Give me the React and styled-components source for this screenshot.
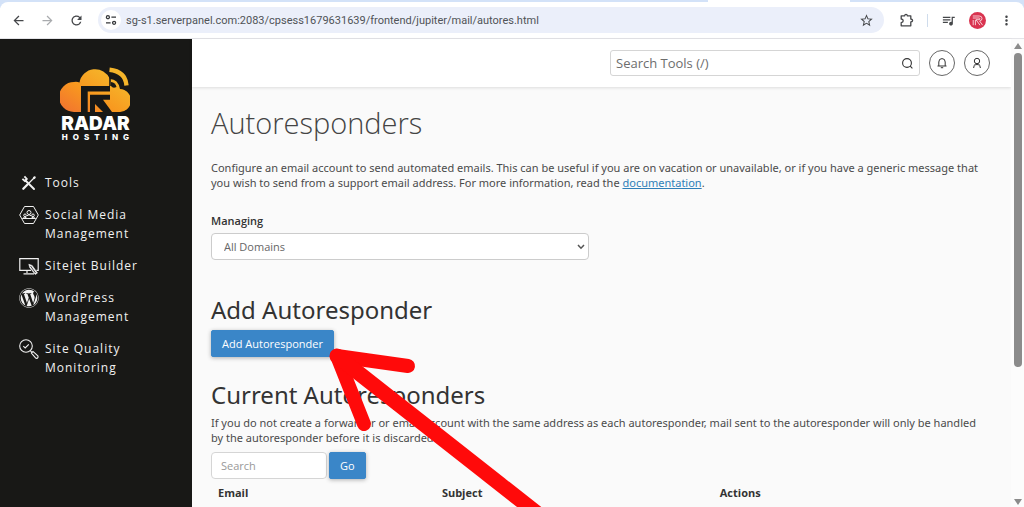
import React, { useState } from 'react';
import styled, { createGlobalStyle } from 'styled-components';
import {
  MdArrowBack,
  MdArrowForward,
  MdRefresh,
  MdStarBorder,
  MdQueueMusic,
  MdMoreVert,
} from 'react-icons/md';
import { FaWordpress } from 'react-icons/fa';

const GlobalStyle = createGlobalStyle`
  * {
    box-sizing: border-box;
  }
  body {
    margin: 0;
    overflow: hidden;
    background: #fafafa;
    color: #444;
    font-family: "Open Sans", "Noto Sans", sans-serif;
    font-size: 11px;
    line-height: 15px;
  }
  button, input, select {
    font: inherit;
    color: inherit;
    margin: 0;
  }
`;

const Window = styled.div`
  display: flex;
  flex-direction: column;
  height: 100vh;
  overflow: hidden;
`;

/* browser bar */

const TabStrip = styled.div`
  flex: none;
  display: flex;
  justify-content: flex-end;
  height: 8px;
  margin-bottom: -6px;
  padding-right: 17%;
  background: #d3e2f8;
`;

const ActiveTab = styled.div`
  width: 142px;
  background: #fff;
`;

const BrowserBar = styled.div`
  flex: none;
  display: flex;
  align-items: center;
  height: 37px;
  padding: 0 3px 0 4px;
  background: #fff;
  border-bottom: 1px solid #e4e4e8;
  border-radius: 8px 8px 0 0;
`;

const BarButton = styled.button`
  display: flex;
  align-items: center;
  justify-content: center;
  flex: none;
  width: ${(props) => props.$width || 29}px;
  height: 24px;
  padding: 0;
  border: 0;
  background: none;
  color: ${(props) => (props.$dim ? '#a9abae' : '#45474a')};
  font-size: 15px;
`;

const NavButtons = styled.div`
  display: flex;
  flex: none;
`;

const AddressBar = styled.div`
  flex: 1;
  display: flex;
  align-items: center;
  height: 26px;
  margin: 0 3px 0 7px;
  padding: 0 8px 0 3px;
  border-radius: 13px;
  background: #ebeffa;
`;

const SiteInfo = styled.button`
  display: flex;
  align-items: center;
  justify-content: center;
  width: 20px;
  height: 20px;
  padding: 0;
  border: 0;
  border-radius: 50%;
  background: #fff;
  color: #35373a;
`;

const Address = styled.input`
  flex: 1;
  min-width: 0;
  padding: 0 5px;
  border: 0;
  background: none;
  color: #505357;
  font-family: Roboto, "Open Sans", sans-serif;
  outline: none;
`;

const Divider = styled.span`
  width: 1px;
  height: 13px;
  margin-right: 6px;
  background: #cfdcec;
`;

const Avatar = styled.span`
  display: block;
  width: 17px;
  height: 17px;
  border-radius: 50%;
  background: #d93450;
`;

/* page frame */

const Page = styled.div`
  flex: 1;
  display: flex;
  min-height: 0;
`;

const Sidebar = styled.aside`
  flex: none;
  display: flex;
  flex-direction: column;
  width: 192px;
  padding: 28px 20px 0 19px;
  background: #181816;
  color: #f1f1f1;
`;

const Logo = styled.a`
  display: flex;
  flex-direction: column;
  align-items: center;
  align-self: center;
  margin-bottom: 32px;
  color: #fff;
  font-family: Inter, sans-serif;
  text-decoration: none;
`;

const LogoName = styled.span`
  margin-top: 3px;
  font-size: 19px;
  font-weight: 900;
  line-height: 18px;
`;

const LogoSub = styled.span`
  padding-left: 5px;
  font-size: 8px;
  font-weight: 800;
  letter-spacing: 5px;
  line-height: 8px;
`;

const Menu = styled.nav`
  display: flex;
  flex-direction: column;
  gap: 13px;
`;

const MenuLink = styled.a`
  display: flex;
  gap: 6px;
  color: inherit;
  font-size: 12px;
  letter-spacing: 1px;
  line-height: 19px;
  text-decoration: none;

  svg {
    flex: none;
    margin-bottom: -1px;
  }
`;

const Main = styled.main`
  flex: 1;
  min-width: 0;
`;

const Header = styled.header`
  display: flex;
  align-items: center;
  justify-content: flex-end;
  gap: 9px;
  height: 48px;
  padding-right: 21px;
  background: #fff;
  box-shadow: 0 1px 3px rgba(0, 0, 0, 0.12);
`;

const ToolSearch = styled.form`
  display: flex;
  align-items: center;
  width: 310px;
  height: 26px;
  padding: 0 5px;
  border: 1px solid #d5d5d5;
  border-radius: 3px;
  background: #fff;

  input {
    flex: 1;
    min-width: 0;
    padding: 0;
    border: 0;
    outline: none;
    font-size: 13px;
  }
  input::placeholder {
    color: #6d6d6d;
  }
  button {
    display: flex;
    padding: 0;
    border: 0;
    background: none;
  }
`;

const RoundButton = styled.button`
  display: flex;
  align-items: center;
  justify-content: center;
  width: 26px;
  height: 26px;
  padding: 0;
  border: 1px solid #666;
  border-radius: 50%;
  background: #fff;
  color: #333;
`;

const Content = styled.div`
  padding: 18px 28px 0 19px;
`;

const Title = styled.h1`
  margin: 0 0 19px;
  color: #444;
  font-size: 29px;
  font-weight: 300;
  line-height: 36px;
`;

const Text = styled.p`
  margin: 0 0 ${(props) => props.$gap}px;
  color: #4a4a4a;
  font-family: "Noto Sans", "Open Sans", sans-serif;
`;

const DocLink = styled.a`
  color: #2f7fb8;
`;

const Label = styled.label`
  display: block;
  margin-bottom: 4px;
  color: #333;
  font-weight: 600;
  line-height: 16px;
`;

const SelectBox = styled.div`
  display: flex;
  align-items: center;
  width: 49%;
  height: 27px;
  margin-bottom: 35px;
  padding-right: 3px;
  border: 1px solid #ccc;
  border-radius: 4px;
  background: #fff;

  select {
    flex: 1;
    height: 100%;
    padding: 0 12px;
    border: 0;
    background: none;
    appearance: none;
    color: #666;
    outline: none;
  }
`;

const SectionTitle = styled.h2`
  margin: 0 0 5px;
  color: #333;
  font-family: "Noto Sans", "Open Sans", sans-serif;
  font-size: 24px;
  font-weight: 400;
  line-height: 30px;
`;

const PrimaryButton = styled.button`
  height: 27px;
  padding: 0 10px;
  border: 1px solid #3a86c8;
  border-radius: 2px;
  background: #3a86c8;
  color: #fff;
  box-shadow: 0 1px 4px rgba(0, 0, 0, 0.3);
`;

const Section = styled.section`
  margin-bottom: 23px;
`;

const SearchRow = styled.form`
  display: flex;
  gap: 2px;
`;

const SearchInput = styled.input`
  width: 116px;
  height: 27px;
  padding: 0 9px;
  border: 1px solid #d5d5d5;
  border-radius: 4px;
  background: #fff;
  outline: none;

  &::placeholder {
    color: #999;
  }
`;

const Table = styled.table`
  width: 100%;
  table-layout: fixed;
  border-collapse: collapse;

  th {
    padding: 0 7px;
    color: #333;
    font-weight: 700;
    line-height: 28px;
    text-align: left;
  }
`;

const Col = styled.col`
  width: ${(props) => props.$width};
`;

const Scrollbar = styled.div`
  flex: none;
  display: flex;
  flex-direction: column;
  align-items: center;
  width: 13px;
  padding: 4px 0 2px;
  background: #fcfcfc;
`;

const ScrollTrack = styled.div`
  flex: 1;
  width: 8px;
  margin: 4px 0;
`;

const ScrollThumb = styled.div`
  height: 71%;
  border-radius: 4px;
  background: #8b8b8b;
`;

const ButtonSpot = styled.div`
  position: relative;
  width: max-content;
`;

const Pointer = styled.svg`
  position: absolute;
  top: 15px;
  left: 115px;
  pointer-events: none;
`;

function CloudLogo() {
  return (
    <svg width="70" height="45" viewBox="0 0 70 45" aria-hidden="true">
      <defs>
        <linearGradient id="cloud" x1="0" y1="0.9" x2="0.8" y2="0.2">
          <stop offset="0" stopColor="#f2742f" />
          <stop offset="0.5" stopColor="#f8981f" />
          <stop offset="1" stopColor="#f5b52a" />
        </linearGradient>
      </defs>
      <path
        fill="url(#cloud)"
        d="M14 45 A14.5 14.5 0 0 1 14 15 Q17 14.5 19.5 15.5 A16 16 0 0 1 50 12 Q58 12 60 22 A11.5 11.5 0 0 1 59 45 Z"
      />
      <path fill="#181816" d="M21 19 H50 V24.5 H27.7 V45 H21 Z" />
      <path fill="#181816" d="M30 27.7 H50 V32.7 H43 L52 45 H43 L35 37 V45 H30 Z" />
      <path fill="none" stroke="#181816" strokeWidth="1.6" d="M50 9 V19" />
      <path fill="#181816" d="M51 15 Q55.5 15.5 56.5 20 Q53 22 51 19 Z" />
      <path fill="none" stroke="#f5b52a" strokeWidth="4.4" d="M49.5 2.8 Q65.5 4.5 66.5 18.5" />
    </svg>
  );
}

function ToolsIcon() {
  return (
    <svg width="20" height="20" viewBox="0 0 20 20" fill="none" stroke="currentColor">
      <path strokeWidth="2" strokeLinecap="round" d="M6.5 7.5 L15 16" />
      <path strokeWidth="1.8" d="M3.4 5.8 L5.8 8 L7.8 6 L5.4 3.4" />
      <path strokeWidth="1.3" strokeLinecap="round" d="M15.5 4.5 L10 10" />
      <path strokeWidth="2.3" strokeLinecap="round" d="M15 5 L15.6 4.4 M8.5 11.5 L4.3 15.8" />
    </svg>
  );
}

function SocialIcon() {
  return (
    <svg width="20" height="20" viewBox="0 0 20 20" fill="none" stroke="currentColor">
      <path strokeWidth="1" d="M5.5 1.5 H14.5 L19.3 10 L14.5 18.5 H5.5 L0.7 10 Z" />
      <circle cx="10" cy="7.5" r="2" />
      <circle cx="6" cy="10.3" r="1.3" />
      <circle cx="14" cy="10.3" r="1.3" />
      <path d="M3.5 13.5 Q6 10.5 8 13.5 H12 Q14 10.5 16.5 13.5 Z M7.5 11 Q10 8.5 12.5 11" />
    </svg>
  );
}

function SitejetIcon() {
  return (
    <svg width="20" height="20" viewBox="0 0 20 20" fill="none" stroke="currentColor">
      <path strokeWidth="1.2" d="M12 14.4 H0.8 V2.6 H19.2 V14.4 H17.5" />
      <path strokeWidth="1.2" d="M8 14.5 V17 M4.5 17.8 H15" />
      <path fill="currentColor" strokeWidth="0.6" d="M9.8 8.2 L13.2 9.5 L18.5 17 L16.2 18.5 L10.7 11.5 Z" />
      <path stroke="#181816" strokeWidth="0.8" d="M11.5 10 L16.5 17" />
    </svg>
  );
}

function QualityIcon() {
  return (
    <svg width="20" height="20" viewBox="0 0 20 20" fill="none" stroke="currentColor">
      <circle cx="7" cy="7" r="6.3" strokeWidth="1.1" />
      <path strokeWidth="1.1" d="M4.3 7.2 L6.2 9 L9.8 5.3 M11.2 11.6 L13 13.3" />
      <path strokeWidth="1.1" d="M12.4 14 L14 12.4 L18.8 16.8 Q19.5 18.2 18.4 19.2 Q17.2 19.6 16.5 18.8 Z" />
    </svg>
  );
}

function SiteInfoIcon() {
  return (
    <svg width="12" height="12" viewBox="0 0 12 12" fill="none" stroke="currentColor" strokeWidth="1.3">
      <circle cx="2.9" cy="3.2" r="1.5" />
      <path d="M6.4 3.2 H11 M1 8.8 H5.6" />
      <circle cx="9.1" cy="8.8" r="1.5" />
    </svg>
  );
}

function ExtensionIcon() {
  return (
    <svg width="14" height="14" viewBox="0 0 14 14" fill="none" stroke="currentColor" strokeWidth="1.3">
      <path
        strokeLinejoin="round"
        d="M1.2 2.8 H4.6 Q4.8 1.4 6 1.4 Q7.2 1.4 7.4 2.8 H10.8 V6 Q12.6 6.2 12.6 7.5 Q12.6 8.8 10.8 9 V12.8 H1.2 V9.6 Q3.2 9.4 3.2 7.8 Q3.2 6.2 1.2 6 Z"
      />
    </svg>
  );
}

function AvatarMark() {
  return (
    <svg width="17" height="17" viewBox="0 0 17 17" fill="none" stroke="#fbdde1" strokeWidth="0.9">
      <path d="M3.8 4 H10.2 Q13 4 13 6.4 Q13 8.8 10.6 9 L13.6 13.2 M3.8 6 H10 Q11 6 11 6.9 Q11 7.7 10 7.7 H7 L11 13.2 M4.2 13.2 V8 M6.4 13.2 V8" />
    </svg>
  );
}

function SearchIcon() {
  return (
    <svg width="13" height="13" viewBox="0 0 13 13" fill="none" stroke="#333" strokeWidth="1.1">
      <circle cx="6" cy="6" r="4.4" />
      <path d="M9.2 9.2 L11.4 11.4" />
    </svg>
  );
}

function BellIcon() {
  return (
    <svg width="12" height="12" viewBox="0 0 12 12" fill="none" stroke="currentColor">
      <path d="M1.5 9 H10.5 M2.8 9 V5 Q2.8 1.6 6 1.6 Q9.2 1.6 9.2 5 V9" />
      <path d="M4.8 10.7 H7.2" />
    </svg>
  );
}

function UserIcon() {
  return (
    <svg width="12" height="12" viewBox="0 0 12 12" fill="none" stroke="currentColor">
      <circle cx="6" cy="4" r="2.7" />
      <path d="M2.6 11 Q2.8 8.4 4.7 6.6 M9.4 11 Q9.2 8.4 7.3 6.6 M4.4 8 Q6 6.8 7.6 8" />
    </svg>
  );
}

const menu = [
  { label: 'Tools', icon: <ToolsIcon /> },
  { label: 'Social Media Management', icon: <SocialIcon /> },
  { label: 'Sitejet Builder', icon: <SitejetIcon /> },
  { label: 'WordPress Management', icon: <FaWordpress size={20} /> },
  { label: 'Site Quality Monitoring', icon: <QualityIcon /> },
];

function Browser() {
  return (
    <>
      <TabStrip>
        <ActiveTab />
      </TabStrip>
      <BrowserBar>
        <NavButtons>
          <BarButton aria-label="Back"><MdArrowBack /></BarButton>
          <BarButton aria-label="Forward" $dim><MdArrowForward /></BarButton>
          <BarButton aria-label="Reload"><MdRefresh /></BarButton>
        </NavButtons>
        <AddressBar>
          <SiteInfo aria-label="Site information"><SiteInfoIcon /></SiteInfo>
          <Address
            aria-label="Address"
            defaultValue="sg-s1.serverpanel.com:2083/cpsess1679631639/frontend/jupiter/mail/autores.html"
          />
          <BarButton aria-label="Bookmark" $width={20}><MdStarBorder /></BarButton>
        </AddressBar>
        <BarButton aria-label="Extensions" $width={40}><ExtensionIcon /></BarButton>
        <Divider />
        <BarButton aria-label="Media"><MdQueueMusic /></BarButton>
        <BarButton aria-label="Profile"><Avatar><AvatarMark /></Avatar></BarButton>
        <BarButton aria-label="More"><MdMoreVert /></BarButton>
      </BrowserBar>
    </>
  );
}

function App() {
  const [domain, setDomain] = useState('all');
  const [search, setSearch] = useState('');

  const submitHandler = (e) => {
    e.preventDefault();
  };

  return (
    <Window>
      <GlobalStyle />
      <Browser />
      <Page>
        <Sidebar>
          <Logo href="#home">
            <CloudLogo />
            <LogoName>RADAR</LogoName>
            <LogoSub>HOSTING</LogoSub>
          </Logo>
          <Menu>
            {menu.map((item) => (
              <MenuLink href="#" key={item.label}>
                {item.icon}
                <span>{item.label}</span>
              </MenuLink>
            ))}
          </Menu>
        </Sidebar>

        <Main>
          <Header>
            <ToolSearch onSubmit={submitHandler}>
              <input type="text" aria-label="Search Tools" placeholder="Search Tools (/)" />
              <button type="submit" aria-label="Search"><SearchIcon /></button>
            </ToolSearch>
            <RoundButton aria-label="Notifications"><BellIcon /></RoundButton>
            <RoundButton aria-label="Account"><UserIcon /></RoundButton>
          </Header>

          <Content>
            <Title>Autoresponders</Title>
            <Text $gap={23}>
              Configure an email account to send automated emails. This can be useful if you are on
              vacation or unavailable, or if you have a generic message that you wish to send from a
              support email address. For more information, read the{' '}
              <DocLink href="#documentation">documentation</DocLink>.
            </Text>

            <Label htmlFor="domain">Managing</Label>
            <SelectBox>
              <select id="domain" value={domain} onChange={(e) => setDomain(e.target.value)}>
                <option value="all">All Domains</option>
              </select>
              <svg width="8" height="6" viewBox="0 0 8 6" fill="none" stroke="#555" strokeWidth="1.5">
                <path d="M1 1 L4 4.2 L7 1" />
              </svg>
            </SelectBox>

            <Section>
              <SectionTitle>Add Autoresponder</SectionTitle>
              <ButtonSpot>
                <PrimaryButton type="button">Add Autoresponder</PrimaryButton>
                <Pointer width="230" height="180" viewBox="0 0 230 180">
                  <g fill="none" stroke="#ff0a0a" strokeLinecap="round" strokeLinejoin="round">
                    <path strokeWidth="14" d="M82 21 L11 11 L38 79" />
                    <path strokeWidth="15" d="M11 11 L221 176" />
                  </g>
                </Pointer>
              </ButtonSpot>
            </Section>

            <SectionTitle>Current Autoresponders</SectionTitle>
            <Text $gap={7}>
              If you do not create a forwarder or email account with the same address as each
              autoresponder, mail sent to the autoresponder will only be handled by the autoresponder
              before it is discarded.
            </Text>
            <SearchRow onSubmit={submitHandler}>
              <SearchInput
                type="text"
                aria-label="Search"
                placeholder="Search"
                value={search}
                onChange={(e) => setSearch(e.target.value)}
              />
              <PrimaryButton type="submit">Go</PrimaryButton>
            </SearchRow>
            <Table>
              <colgroup>
                <Col $width="29%" />
                <Col $width="36%" />
                <Col $width="35%" />
              </colgroup>
              <thead>
                <tr>
                  <th scope="col">Email</th>
                  <th scope="col">Subject</th>
                  <th scope="col">Actions</th>
                </tr>
              </thead>
            </Table>
          </Content>
        </Main>

        <Scrollbar aria-hidden="true">
          <svg width="8" height="6" viewBox="0 0 8 6"><path fill="#8b8b8b" d="M4 0 L8 6 H0 Z" /></svg>
          <ScrollTrack>
            <ScrollThumb />
          </ScrollTrack>
          <svg width="8" height="6" viewBox="0 0 8 6"><path fill="#8b8b8b" d="M0 0 H8 L4 6 Z" /></svg>
        </Scrollbar>
      </Page>
    </Window>
  );
}

export default App;
